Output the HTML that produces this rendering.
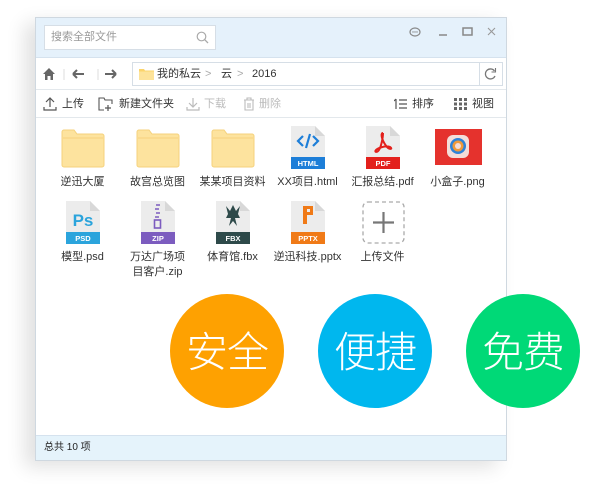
<!DOCTYPE html>
<html><head><meta charset="utf-8"><style>
*{margin:0;padding:0;box-sizing:border-box}
body{width:600px;height:484px;background:#fff;position:relative;overflow:hidden;font-family:"Liberation Sans","Noto Sans CJK SC",sans-serif;font-size:11px;color:#333}
.win{position:absolute;left:35px;top:17px;width:472px;height:444px;border:1px solid #cfd8e0;background:#fff;box-shadow:-10px 6px 18px rgba(0,0,0,.12)}
.title{position:absolute;left:0;top:0;width:100%;height:40px;background:#e5f1fb;border-bottom:1px solid #d5e2ee}
.search{position:absolute;left:8px;top:7px;width:172px;height:25px;background:#fff;border:1px solid #d6dee6;color:#999;font-size:11px;line-height:23px;padding-left:6px}
.nav{position:absolute;top:40px;left:0;width:100%;height:32px;border-bottom:1px solid #e3e8ec}
.addr{position:absolute;left:96px;top:4px;width:371px;height:24px;border:1px solid #d6dee6;font-size:11px;line-height:22px}
.tb{position:absolute;top:72px;left:0;width:100%;height:28px;border-bottom:1px solid #e3e8ec;font-size:11px;line-height:28px}
.tb span{position:absolute}
.item{position:absolute;width:75px;text-align:center;font-size:11px;line-height:15px;color:#333}
.ico{position:absolute}
.status{position:absolute;left:0;bottom:0;width:100%;height:25px;background:#e5f3fb;border-top:1px solid #d5e2ee;font-size:10px;line-height:24px;padding-left:8px;color:#222}
.c{position:absolute;width:114px;height:114px;border-radius:50%;color:#fff;font-size:42px;text-align:center;line-height:112px;font-weight:300;letter-spacing:-1px;font-family:"Noto Sans CJK SC",sans-serif}
</style></head><body>
<div class="win">
 <div class="title">
  <div class="search">搜索全部文件
   <svg style="position:absolute;right:6px;top:5px" width="13" height="13"><circle cx="5.5" cy="5.5" r="4.3" fill="none" stroke="#aaa" stroke-width="1.2"/><path d="M8.6 8.6L12 12" stroke="#aaa" stroke-width="1.3"/></svg></div>
  <svg style="position:absolute;left:373px;top:8px" width="90" height="14">
   <ellipse cx="6" cy="6" rx="5" ry="4" fill="none" stroke="#888" stroke-width="1.2"/><circle cx="4" cy="6" r=".7" fill="#888"/><circle cx="6" cy="6" r=".7" fill="#888"/><circle cx="8" cy="6" r=".7" fill="#888"/>
   <path d="M30 9h8" stroke="#888" stroke-width="1.5"/>
   <rect x="54" y="2" width="9" height="7" fill="none" stroke="#888" stroke-width="1.5"/>
   <path d="M79 2l7 7M86 2l-7 7" stroke="#999" stroke-width="1.1"/>
  </svg>
 </div>
 <div class="nav">
  <svg style="position:absolute;left:6px;top:8px" width="90" height="16">
   <path d="M1 8L7 2L13 8H11V14H8.5V10H5.5V14H3V8Z" fill="#666"/>
   <path d="M22 3v11" stroke="#ddd"/>
   <path d="M31 8h11M31 8l4-4M31 8l4 4" stroke="#666" stroke-width="2" fill="none"/>
   <path d="M56 3v11" stroke="#ddd"/>
   <path d="M74 8h-11M74 8l-4-4M74 8l-4 4" stroke="#666" stroke-width="2" fill="none"/>
  </svg>
  <div class="addr">
   <svg style="position:absolute;left:6px;top:5px" width="15" height="12"><path d="M0 1h5l1 1.5h9V12H0Z" fill="#fbd46b"/><rect x="0" y="3.5" width="15" height="8.5" fill="#fde39a"/></svg>
   <span style="position:absolute;left:24px">我的私云</span>
   <span style="position:absolute;left:72px;color:#aaa">&gt;</span>
   <span style="position:absolute;left:88px">云</span>
   <span style="position:absolute;left:104px;color:#aaa">&gt;</span>
   <span style="position:absolute;left:119px">2016</span>
   <div style="position:absolute;right:0;top:0;width:23px;height:22px;border-left:1px solid #d6dee6"></div>
   <svg style="position:absolute;right:5px;top:4px" width="14" height="14"><path d="M11.5 4A5 5 0 1 0 12 9" fill="none" stroke="#777" stroke-width="1.3"/><path d="M12.5 1v4h-4" fill="none" stroke="#777" stroke-width="1.1"/></svg>
  </div>
 </div>
 <div class="tb">
  <svg style="position:absolute;left:7px;top:7px" width="14" height="14"><path d="M7 1v9M3 5l4-4 4 4M1 10v3h12v-3" fill="none" stroke="#555" stroke-width="1.2"/></svg>
  <span style="left:26px">上传</span>
  <svg style="position:absolute;left:62px;top:7px" width="16" height="14"><path d="M6 13H1V1h5l1 2h7v4" fill="none" stroke="#555" stroke-width="1.1"/><path d="M10 8v6M7 11h6" stroke="#555" stroke-width="1.2"/></svg>
  <span style="left:83px">新建文件夹</span>
  <svg style="position:absolute;left:150px;top:7px" width="14" height="14"><path d="M7 1v9M3 6l4 4 4-4M1 10v3h12v-3" fill="none" stroke="#bbb" stroke-width="1.2"/></svg>
  <span style="left:168px;color:#bbb">下载</span>
  <svg style="position:absolute;left:207px;top:7px" width="12" height="14"><path d="M1 3h10M4 3V1h4v2M2 3v10h8V3M5 6v5M7 6v5" fill="none" stroke="#bbb" stroke-width="1.1"/></svg>
  <span style="left:223px;color:#bbb">删除</span>
  <svg style="position:absolute;left:358px;top:8px" width="14" height="12"><path d="M2 1v10M0 3l2-2M5 2h8M5 6h8M5 10h8" fill="none" stroke="#555" stroke-width="1.2"/></svg>
  <span style="left:376px">排序</span>
  <svg style="position:absolute;left:418px;top:8px" width="13" height="12"><g fill="#666"><rect x="0" y="0" width="3" height="3"/><rect x="5" y="0" width="3" height="3"/><rect x="10" y="0" width="3" height="3"/><rect x="0" y="4.5" width="3" height="3"/><rect x="5" y="4.5" width="3" height="3"/><rect x="10" y="4.5" width="3" height="3"/><rect x="0" y="9" width="3" height="3"/><rect x="5" y="9" width="3" height="3"/><rect x="10" y="9" width="3" height="3"/></g></svg>
  <span style="left:436px">视图</span>
 </div>
 <div class="status">总共 10 项</div>
</div>

<svg class="ico" style="left:0;top:0" width="600" height="300">
 <defs>
  <g id="fold"><path d="M0 8 V3 a2 2 0 0 1 2-2 h10 l3 4 h25 a2 2 0 0 1 2 2 v29 a2 2 0 0 1 -2 2 h-38 a2 2 0 0 1 -2-2z" fill="#fde39e" stroke="#f5d27c" stroke-width="1"/><path d="M1 9h40" stroke="#f6d27d"/></g>
  <g id="doc"><path d="M0 0h24l10 10v33h-34z" fill="#ececec"/><path d="M24 0v10h10z" fill="#d8d8d8"/></g>
 </defs>
 <use href="#fold" x="62" y="129"/>
 <use href="#fold" x="137" y="129"/>
 <use href="#fold" x="212" y="129"/>
 <use href="#doc" x="291" y="126"/><rect x="291" y="157" width="34" height="12" fill="#1d7ed8"/>
 <text x="308" y="166" font-size="7.5" font-weight="bold" fill="#fff" text-anchor="middle" font-family="Liberation Sans">HTML</text>
 <path d="M303 136l-5 5 5 5M313 136l5 5-5 5M310 134l-4 14" fill="none" stroke="#1d7ed8" stroke-width="2.2"/>
 <use href="#doc" x="366" y="126"/><rect x="366" y="157" width="34" height="12" fill="#e3201c"/>
 <text x="383" y="166" font-size="7.5" font-weight="bold" fill="#fff" text-anchor="middle" font-family="Liberation Sans">PDF</text>
 <path d="M383 133c-3 0 -1 8 4 14c3 3 6 2 3 0c-6-2-13 2-14 3c-2 2 1 3 3 0c2-3 4-12 4-17" fill="none" stroke="#e3201c" stroke-width="2"/>
 <rect x="435" y="129" width="47" height="36" fill="#e5322d"/>
 <rect x="447" y="135" width="22" height="23" rx="6" fill="#f4ddd8"/>
 <circle cx="458" cy="146" r="8" fill="#2f83d8"/><circle cx="458" cy="146" r="5.5" fill="#f09a3a"/><circle cx="458" cy="146" r="3" fill="#f4ddd8"/>
 <use href="#doc" x="66" y="201"/><rect x="66" y="232" width="34" height="12" fill="#2ba4dc"/>
 <text x="83" y="241" font-size="7.5" font-weight="bold" fill="#fff" text-anchor="middle" font-family="Liberation Sans">PSD</text>
 <text x="83" y="226" font-size="17" font-weight="bold" fill="#2ba4dc" text-anchor="middle" font-family="Liberation Sans">Ps</text>
 <use href="#doc" x="141" y="201"/><rect x="141" y="232" width="34" height="12" fill="#7c5cbf"/>
 <text x="158" y="241" font-size="7.5" font-weight="bold" fill="#fff" text-anchor="middle" font-family="Liberation Sans">ZIP</text>
 <path d="M156 205h4M155 209h4M156 213h4M155 217h4" stroke="#7c5cbf" stroke-width="1.6"/><rect x="154.5" y="220" width="6" height="8" fill="none" stroke="#7c5cbf" stroke-width="1.6"/>
 <use href="#doc" x="216" y="201"/><rect x="216" y="232" width="34" height="12" fill="#2e4a4a"/>
 <text x="233" y="241" font-size="7.5" font-weight="bold" fill="#fff" text-anchor="middle" font-family="Liberation Sans">FBX</text>
 <path d="M226 206l4 5 3-6 3 6 4-5-2 8 2 4-5 0 2 8-4-5-4 5 2-8-5 0 2-4z" fill="#2e4a4a"/>
 <use href="#doc" x="291" y="201"/><rect x="291" y="232" width="34" height="12" fill="#f07a17"/>
 <text x="308" y="241" font-size="7.5" font-weight="bold" fill="#fff" text-anchor="middle" font-family="Liberation Sans">PPTX</text>
 <path d="M303 206h10v9h-6v9h-4z" fill="#f07a17"/><rect x="307" y="209" width="3" height="3" fill="#ececec"/>
 <rect x="363" y="202" width="41" height="41" rx="5" fill="none" stroke="#aaa" stroke-width="1.3" stroke-dasharray="4 3"/>
 <path d="M383.5 212v21M373 222.5h21" stroke="#777" stroke-width="2.2"/>
</svg>
<div class="item" style="left:45px;top:175px">逆迅大厦</div>
<div class="item" style="left:120px;top:175px">故宫总览图</div>
<div class="item" style="left:195px;top:175px">某某项目资料</div>
<div class="item" style="left:270px;top:175px">XX项目.html</div>
<div class="item" style="left:345px;top:175px">汇报总结.pdf</div>
<div class="item" style="left:420px;top:175px">小盒子.png</div>
<div class="item" style="left:45px;top:250px">模型.psd</div>
<div class="item" style="left:120px;top:250px">万达广场项<br>目客户.zip</div>
<div class="item" style="left:195px;top:250px">体育馆.fbx</div>
<div class="item" style="left:270px;top:250px">逆迅科技.pptx</div>
<div class="item" style="left:345px;top:250px">上传文件</div>

<div class="c" style="left:170px;top:294px;background:#fea101">安全</div>
<div class="c" style="left:318px;top:294px;background:#00b7ee">便捷</div>
<div class="c" style="left:466px;top:294px;background:#00d977">免费</div>
</body></html>
